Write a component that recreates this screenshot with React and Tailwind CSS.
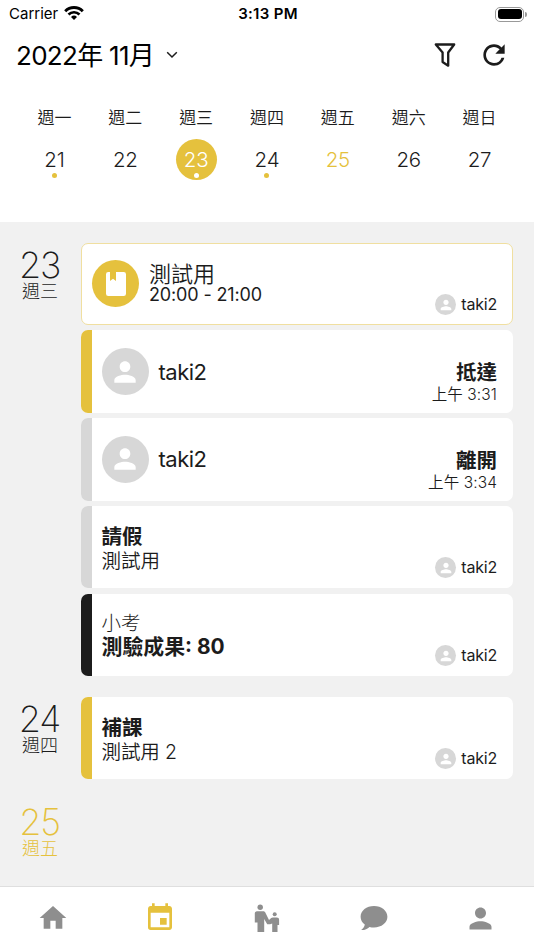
import clsx from 'clsx';
import { MdHome, MdEvent, MdPerson, MdRefresh } from 'react-icons/md';

const week = [
  { label: '週一', day: 21, dot: true },
  { label: '週二', day: 22 },
  { label: '週三', day: 23, dot: true, selected: true },
  { label: '週四', day: 24, dot: true },
  { label: '週五', day: 25, today: true },
  { label: '週六', day: 26 },
  { label: '週日', day: 27 },
];

const StatusBar = () => (
  <div className="grid h-7 grid-cols-3 items-center pl-[9px] pr-[7px] text-black">
    <div className="flex items-center gap-[6px] text-[15px]">
      <span>Carrier</span>
      <svg width="20" height="14" viewBox="0 0 20 14" className="-mt-[3px]">
        <path d="M1.2 5.2a12.4 12.4 0 0 1 17.6 0" fill="none" stroke="black" strokeWidth="2.9" />
        <path d="M4.5 8.5a7.8 7.8 0 0 1 11 0" fill="none" stroke="black" strokeWidth="2.7" />
        <path d="M10 14 7 11a4.3 4.3 0 0 1 6 0z" />
      </svg>
    </div>
    <div className="pt-px text-center text-[15px] font-semibold tracking-[0.3px]">3:13 PM</div>
    <div className="flex items-center justify-end gap-px">
      <div className="h-[15px] w-[29px] rounded-[5px] border border-[#999] p-[1.5px]">
        <div className="h-full rounded-[3px] bg-black" />
      </div>
      <div className="h-[5px] w-[2px] rounded-r bg-[#999]" />
    </div>
  </div>
);

const Header = () => (
  <div className="flex h-[54px] items-center justify-between pl-4 pr-6">
    <div className="flex items-center gap-3">
      <h1 className="pt-px text-[26px] leading-8 tracking-[-0.7px] text-black">2022年 11月</h1>
      <svg width="12" height="8" viewBox="0 0 12 8" fill="none" stroke="#1c1c1c" strokeWidth="1.5">
        <path d="M1.2 1.2 6 6l4.8-4.8" />
      </svg>
    </div>
    <div className="flex items-center gap-[22px] pb-px">
      <svg width="22" height="24" viewBox="0 0 22 24" fill="none" stroke="#1c1c1c" strokeWidth="2.3" strokeLinejoin="round">
        <path d="M1.8 1.500h18.400l-6 8v13.200l-5.600-3.700V9.500z" />
      </svg>
      <MdRefresh size={32} color="#1c1c1c" />
    </div>
  </div>
);

const WeekStrip = () => (
  <div className="grid h-[140px] grid-cols-7 px-[19px] pt-[25px]">
    {week.map((d) => (
      <div key={d.day} className="flex flex-col items-center">
        <div className="text-[17px] font-[350] leading-[22px]">{d.label}</div>
        <div
          className={clsx(
            'relative mt-[10px] flex h-[41px] w-[41px] items-center justify-center rounded-full pt-px text-[20.5px] font-light tracking-[-0.2px]',
            d.selected && 'bg-[#e5c13d] text-white',
            d.today && 'text-[#e5c13d]'
          )}
        >
          {d.day}
          {d.dot && (
            <span
              className={clsx(
                'absolute bottom-[2px] left-[18px] h-[5px] w-[5px] rounded-full',
                d.selected ? 'bg-white' : 'bg-[#e5c13d]'
              )}
            />
          )}
        </div>
      </div>
    ))}
  </div>
);

const Avatar = ({ large }) => (
  <div
    className={clsx(
      'flex shrink-0 items-center justify-center rounded-full bg-[#d7d7d7] text-white',
      large ? 'h-[47px] w-[47px]' : 'h-[21px] w-[21px]'
    )}
  >
    <MdPerson size={large ? 32 : 16} />
  </div>
);

const User = () => (
  <div className="flex items-center gap-[5px] self-end text-base leading-[21px] tracking-[-0.2px]">
    <Avatar />
    taki2
  </div>
);

const Card = ({ bar, children }) => (
  <div className="flex h-[82.5px] overflow-hidden rounded-[7px] bg-white">
    <div className={clsx('w-[10.5px] shrink-0', bar)} />
    <div className="flex grow justify-between pb-[10px] pl-[10px] pr-4">{children}</div>
  </div>
);

const Attendance = ({ bar, status, time }) => (
  <Card bar={bar}>
    <div className="flex items-center gap-[10px] pt-[10px] text-[22px] tracking-[-0.5px]">
      <Avatar large />
      <span className="pt-px">taki2</span>
    </div>
    <div className="pt-[29.5px] text-right">
      <div className="text-[20.5px] font-bold leading-[25px]">{status}</div>
      <div className="text-[15.5px] font-[350] leading-5 tracking-[0.1px]">{time}</div>
    </div>
  </Card>
);

const Day = ({ day, label, today, children }) => (
  <section className="flex">
    <div
      className={clsx(
        'flex w-[81px] shrink-0 flex-col items-center pr-px pt-1 font-light',
        today && 'text-[#e5c13d]'
      )}
    >
      <div className="pr-px text-[36px] font-extralight leading-9 tracking-[-1.2px]">{day}</div>
      <div className="text-[18px] leading-[17px]">{label}</div>
    </div>
    <div className="flex grow flex-col gap-[5.2px]">{children}</div>
  </section>
);

// Adult holding a child's hand
const FamilyIcon = () => (
  <svg width="26" height="28" viewBox="0 0 26 28" fill="currentColor">
    <circle cx="6.200" cy="3.300" r="2.700" />
    <path d="M3 7.300h6.200c1.100 0 1.800.5 2.200 1.500l3.600 7.200 2.200-1.900c.5-.5 1-.7 1.700-.7h3.900c1.400 0 2.300.9 2.300 2.300V21h-1.600v7h-5.300v-8.500l-2 .7h-3L10.200 15v13H3.500v-9.500H.8V9.600C.8 8.200 1.600 7.300 3 7.300z" />
    <circle cx="20.700" cy="10.300" r="2" />
  </svg>
);

const TabBar = () => (
  <nav className="grid h-16 shrink-0 grid-cols-5 items-center justify-items-center border-t border-[#dfdfdf] bg-white pb-px text-[#8e8e8e]">
    <MdHome size={32} />
    <MdEvent size={32} color="#e5c13d" className="mb-px" />
    <FamilyIcon />
    <svg width="28" height="26" viewBox="0 0 28 26" fill="currentColor">
      <path d="M14 1C6.500 1 .6 5.700 .6 11.700c0 3.200 1.600 5.900 4.200 7.900-.3 2.300-1.600 4-3.600 5.400 3.500.1 6.300-1 8.300-3.100 1.400.4 2.900.5 4.500.5 7.500 0 13.400-4.700 13.400-10.700S21.500 1 14 1z" />
    </svg>
    <MdPerson size={33} />
  </nav>
);

export default function App() {
  return (
    <div className="flex h-[950px] w-[534px] flex-col overflow-hidden bg-white font-['Inter','Noto_Sans_CJK_TC',sans-serif] text-[#1c1c1c]">
      <StatusBar />
      <Header />
      <WeekStrip />
      <main className="flex grow flex-col gap-[20.5px] bg-[#f1f1f1] pr-[21px] pt-[20.8px]">
        <Day day="23" label="週三">
          {/* Scheduled lesson */}
          <div className="flex h-[82.5px] justify-between rounded-[7px] border border-[#f0dfa0] bg-white pb-[9px] pl-[10px] pr-[15px]">
            <div className="flex items-center gap-[10px] pt-2">
              <div className="flex h-[47px] w-[47px] items-center justify-center rounded-full bg-[#e5c13d]">
                <svg width="20" height="24" viewBox="0 0 20 24" fill="white">
                  <path d="M2.300 0H4v9l3-2.300L10 9V0h7.700A2.300 2.300 0 0 1 20 2.300v19.400a2.300 2.300 0 0 1-2.300 2.300H2.300A2.300 2.300 0 0 1 0 21.700V2.300A2.300 2.300 0 0 1 2.300 0z" />
                </svg>
              </div>
              <div className="pb-px">
                <div className="text-[22px] font-[350] leading-[22px]">測試用</div>
                <div className="text-[18px] leading-[19px] tracking-[-0.15px]">20:00 - 21:00</div>
              </div>
            </div>
            <User />
          </div>
          <Attendance bar="bg-[#e5c13d]" status="抵達" time="上午 3:31" />
          <Attendance bar="bg-[#d7d7d7]" status="離開" time="上午 3:34" />
          <Card bar="bg-[#d7d7d7]">
            <div className="pt-[19px]">
              <div className="text-[20.5px] font-bold leading-6">請假</div>
              <div className="text-[19.5px] font-[350] leading-6">測試用</div>
            </div>
            <User />
          </Card>
          <Card bar="bg-[#1c1c1c]">
            <div className="pt-[17.5px]">
              <div className="text-[19.5px] font-light leading-6">小考</div>
              <div className="text-[20.9px] font-bold leading-6">測驗成果: 80</div>
            </div>
            <User />
          </Card>
        </Day>
        <Day day="24" label="週四">
          <Card bar="bg-[#e5c13d]">
            <div className="pt-[19px]">
              <div className="text-[20.5px] font-bold leading-6">補課</div>
              <div className="text-[19.5px] font-[350] leading-6 tracking-[-0.1px]">測試用 2</div>
            </div>
            <User />
          </Card>
        </Day>
        <Day day="25" label="週五" today />
      </main>
      <TabBar />
    </div>
  );
}
